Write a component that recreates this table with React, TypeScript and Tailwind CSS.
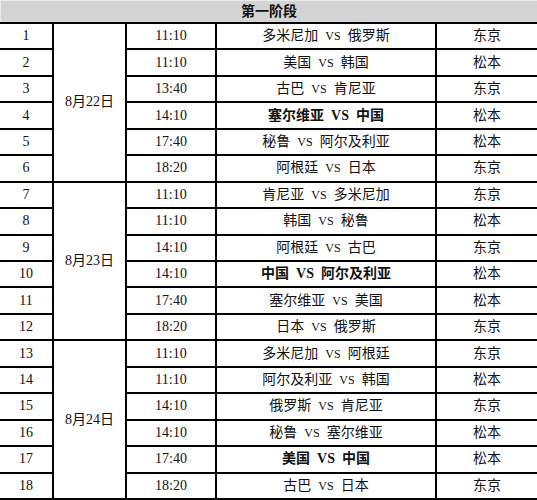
import React from "react"

type Match = { no: number; time: string; home: string; away: string; city: string; bold?: boolean }

const days: { date: string; games: Match[] }[] = [
  {
    date: "8月22日",
    games: [
      { no: 1, time: "11:10", home: "多米尼加", away: "俄罗斯", city: "东京" },
      { no: 2, time: "11:10", home: "美国", away: "韩国", city: "松本" },
      { no: 3, time: "13:40", home: "古巴", away: "肯尼亚", city: "东京" },
      { no: 4, time: "14:10", home: "塞尔维亚", away: "中国", city: "松本", bold: true },
      { no: 5, time: "17:40", home: "秘鲁", away: "阿尔及利亚", city: "松本" },
      { no: 6, time: "18:20", home: "阿根廷", away: "日本", city: "东京" },
    ],
  },
  {
    date: "8月23日",
    games: [
      { no: 7, time: "11:10", home: "肯尼亚", away: "多米尼加", city: "东京" },
      { no: 8, time: "11:10", home: "韩国", away: "秘鲁", city: "松本" },
      { no: 9, time: "14:10", home: "阿根廷", away: "古巴", city: "东京" },
      { no: 10, time: "14:10", home: "中国", away: "阿尔及利亚", city: "松本", bold: true },
      { no: 11, time: "17:40", home: "塞尔维亚", away: "美国", city: "松本" },
      { no: 12, time: "18:20", home: "日本", away: "俄罗斯", city: "东京" },
    ],
  },
  {
    date: "8月24日",
    games: [
      { no: 13, time: "11:10", home: "多米尼加", away: "阿根廷", city: "东京" },
      { no: 14, time: "11:10", home: "阿尔及利亚", away: "韩国", city: "松本" },
      { no: 15, time: "14:10", home: "俄罗斯", away: "肯尼亚", city: "东京" },
      { no: 16, time: "14:10", home: "秘鲁", away: "塞尔维亚", city: "松本" },
      { no: 17, time: "17:40", home: "美国", away: "中国", city: "松本", bold: true },
      { no: 18, time: "18:20", home: "古巴", away: "日本", city: "东京" },
    ],
  },
]

const cell = "bg-white flex items-center justify-center leading-none"

export default function App() {
  return (
    <div className="w-[537px] h-[500px] bg-black pb-[2px] flex flex-col gap-[2px] font-['Liberation_Serif','Noto_Sans_CJK_SC',serif] text-[14px] text-[#111]">
      {/* header */}
      <div className="h-[22px] shrink-0 bg-[#d4d4d4] border-t border-l border-[#ececec] flex items-center justify-center font-bold leading-none">
        第一阶段
      </div>

      {days.map((day) => (
        <div
          key={day.date}
          className="flex-1 grid grid-cols-[52px_71px_88px_218px_1fr] grid-rows-6 gap-[2px]"
        >
          <div className={`${cell} col-start-2 row-start-1 row-span-6`}>{day.date}</div>
          {day.games.map((g) => (
            <React.Fragment key={g.no}>
              <div className={cell}>{g.no}</div>
              <div className={cell}>{g.time}</div>
              <div className={`${cell} ${g.bold ? "font-bold" : ""}`}>
                {g.home}
                <span className={g.bold ? "mx-[7px]" : "mx-[7px] text-[12px]"}>VS</span>
                {g.away}
              </div>
              <div className={cell}>{g.city}</div>
            </React.Fragment>
          ))}
        </div>
      ))}
    </div>
  )
}
